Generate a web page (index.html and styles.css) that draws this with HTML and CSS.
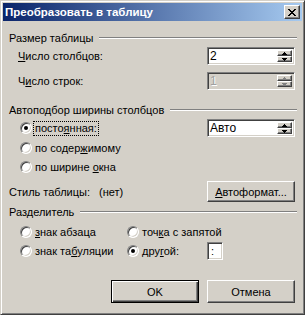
FILE: index.html
```html
<!DOCTYPE html>
<html lang="ru">
<head>
    <meta charset="UTF-8">
    <title>Преобразовать в таблицу</title>
    <link rel="stylesheet" href="styles.css">
</head>
<body>
    <div class="dialog">
        <div class="titlebar">
            <span class="title">Преобразовать в таблицу</span>
            <button class="close-button">
                <svg width="8" height="7" viewBox="0 0 8 7" shape-rendering="crispEdges"><path d="M0 0h2v1H0zM6 0h2v1H6zM1 1h2v1H1zM5 1h2v1H5zM2 2h4v1H2zM3 3h2v1H3zM2 4h4v1H2zM1 5h2v1H1zM5 5h2v1H5zM0 6h2v1H0zM6 6h2v1H6z"/></svg>
            </button>
        </div>

        <div class="dialog-body">
            <div class="group-title head-size"><span>Размер таблицы</span></div>

            <div class="field-row row-cols">
                <span><u>Ч</u>исло столбцов:</span>
                <div class="spin">
                    <span class="spin-value">2</span>
                    <div class="spin-buttons">
                        <span class="spin-btn"><svg width="5" height="3" viewBox="0 0 5 3" shape-rendering="crispEdges"><path d="M2 0h1v1H2zM1 1h3v1H1zM0 2h5v1H0z"/></svg></span>
                        <span class="spin-btn"><svg width="5" height="3" viewBox="0 0 5 3" shape-rendering="crispEdges"><path d="M0 0h5v1H0zM1 1h3v1H1zM2 2h1v1H2z"/></svg></span>
                    </div>
                </div>
            </div>

            <div class="field-row row-rows">
                <span>Ч<u>и</u>сло строк:</span>
                <div class="spin disabled">
                    <span class="spin-value">1</span>
                    <div class="spin-buttons">
                        <span class="spin-btn"><svg width="5" height="3" viewBox="0 0 5 3" shape-rendering="crispEdges"><path d="M2 0h1v1H2zM1 1h3v1H1zM0 2h5v1H0z"/></svg></span>
                        <span class="spin-btn"><svg width="5" height="3" viewBox="0 0 5 3" shape-rendering="crispEdges"><path d="M0 0h5v1H0zM1 1h3v1H1zM2 2h1v1H2z"/></svg></span>
                    </div>
                </div>
            </div>

            <div class="group-title head-fit"><span>Автоподбор ширины столбцов</span></div>

            <div class="radio-row fit-1">
                <label class="radio"><span class="radio-dot checked"></span><span class="radio-text focused">посто<u>я</u>нная:</span></label>
                <div class="spin">
                    <span class="spin-value">Авто</span>
                    <div class="spin-buttons">
                        <span class="spin-btn"><svg width="5" height="3" viewBox="0 0 5 3" shape-rendering="crispEdges"><path d="M2 0h1v1H2zM1 1h3v1H1zM0 2h5v1H0z"/></svg></span>
                        <span class="spin-btn"><svg width="5" height="3" viewBox="0 0 5 3" shape-rendering="crispEdges"><path d="M0 0h5v1H0zM1 1h3v1H1zM2 2h1v1H2z"/></svg></span>
                    </div>
                </div>
            </div>
            <div class="radio-row fit-2">
                <label class="radio"><span class="radio-dot"></span><span class="radio-text">по содер<u>ж</u>имому</span></label>
            </div>
            <div class="radio-row fit-3">
                <label class="radio"><span class="radio-dot"></span><span class="radio-text">по ширине <u>о</u>кна</span></label>
            </div>

            <div class="style-row">
                <span class="style-label">Стиль таблицы:</span>
                <span class="style-value">(нет)</span>
                <button class="button"><u>А</u>втоформат...</button>
            </div>

            <div class="group-title head-sep"><span>Разделитель</span></div>

            <div class="radio-row sep-1">
                <label class="radio sep-cell"><span class="radio-dot"></span><span class="radio-text"><u>з</u>нак абзаца</span></label>
                <label class="radio"><span class="radio-dot"></span><span class="radio-text">точ<u>к</u>а с запятой</span></label>
            </div>
            <div class="radio-row sep-2">
                <label class="radio sep-cell"><span class="radio-dot"></span><span class="radio-text">знак та<u>б</u>уляции</span></label>
                <label class="radio other-cell"><span class="radio-dot checked"></span><span class="radio-text">дру<u>г</u>ой:</span></label>
                <span class="small-input">:</span>
            </div>

            <div class="actions">
                <button class="button default">OK</button>
                <button class="button">Отмена</button>
            </div>
        </div>
    </div>
</body>
</html>
```

FILE: styles.css
```css
body {
    margin: 0;
    font-family: "Liberation Sans", Arial, sans-serif;
    font-size: 11px;
    color: #000;
    background: #d4d0c8;
}

u {
    text-decoration: underline;
    text-underline-offset: 1px;
}

.dialog {
    width: 305px;
    height: 315px;
    box-sizing: border-box;
    background: #d4d0c8;
    border: 1px solid;
    border-color: #d4d0c8 #404040 #404040 #d4d0c8;
    box-shadow: inset 1px 1px #fff, inset -1px -1px #808080;
    padding: 2px;
}

.titlebar {
    height: 18px;
    display: flex;
    align-items: center;
    justify-content: space-between;
    background: linear-gradient(to right, #0a246a, #a6caf0);
    padding: 0 2px 0 2px;
}

.title {
    color: #fff;
    font-weight: bold;
    font-size: 11.5px;
}

.close-button {
    width: 16px;
    height: 14px;
    padding: 0;
    display: flex;
    align-items: center;
    justify-content: center;
    background: #d4d0c8;
    border: 1px solid;
    border-color: #fff #404040 #404040 #fff;
    box-shadow: inset -1px -1px #808080;
}

.dialog-body {
    padding: 10px 5px 0 6px;
}

.group-title {
    height: 14px;
    display: flex;
    align-items: center;
}

.group-title::after {
    content: '';
    flex: 1;
    margin-left: 6px;
    border-top: 1px solid #808080;
    border-bottom: 1px solid #fff;
}

.head-fit { margin-top: 13px; }
.head-sep { margin-top: 3px; }

.field-row {
    height: 18px;
    display: flex;
    align-items: center;
    justify-content: space-between;
    padding: 0 2px 0 9px;
}

.row-cols { margin-top: 2px; }
.row-rows { margin-top: 7px; }

.spin {
    width: 88px;
    height: 18px;
    box-sizing: border-box;
    display: flex;
    background: #fff;
    border: 1px solid;
    border-color: #808080 #fff #fff #808080;
    box-shadow: inset 1px 1px #404040, inset -1px -1px #d4d0c8;
    padding: 2px;
}

.spin-value {
    flex: 1;
    font-size: 12px;
    line-height: 12px;
}

.spin-buttons {
    width: 15px;
    display: flex;
    flex-direction: column;
}

.spin-btn {
    flex: 1;
    display: flex;
    align-items: center;
    justify-content: center;
    background: #d4d0c8;
    border: 1px solid;
    border-color: #fff #404040 #404040 #fff;
    box-shadow: inset -1px -1px #808080;
}

.spin.disabled {
    background: #d4d0c8;
}

.spin.disabled .spin-value {
    color: #a0a0a0;
    text-shadow: 1px 1px #fff;
}

.spin.disabled svg {
    fill: #808080;
}

.radio-row {
    height: 18px;
    display: flex;
    align-items: center;
    padding: 0 2px 0 11px;
}

.fit-1 {
    margin-top: 2px;
    justify-content: space-between;
}
.fit-2 { margin-top: 2px; }
.fit-3 { margin-top: 1px; }
.sep-1 { margin-top: 4px; }
.sep-2 { margin-top: 1px; }

.radio {
    display: flex;
    align-items: center;
}

.radio-dot {
    width: 12px;
    height: 12px;
    box-sizing: border-box;
    border-radius: 50%;
    background: #fff;
    border: 1px solid;
    border-color: #808080 #fff #fff #808080;
    box-shadow: inset 1px 1px #404040, inset -1px -1px #d4d0c8;
    display: flex;
    align-items: center;
    justify-content: center;
    margin-right: 1px;
}

.radio-dot.checked::after {
    content: '';
    width: 4px;
    height: 4px;
    border-radius: 50%;
    background: #000;
}

.radio-text {
    padding: 0 1px;
    border: 1px dotted transparent;
    line-height: 13px;
}

.radio-text.focused {
    border-color: #000;
}

.sep-cell { width: 107px; }
.other-cell { width: 80px; }

.small-input {
    width: 16px;
    height: 18px;
    box-sizing: border-box;
    background: #fff;
    border: 1px solid;
    border-color: #808080 #fff #fff #808080;
    box-shadow: inset 1px 1px #404040, inset -1px -1px #d4d0c8;
    padding: 2px 0 0 3px;
}

.style-row {
    height: 21px;
    margin-top: 5px;
    display: flex;
    align-items: center;
    padding-right: 2px;
}

.style-label { width: 90px; }
.style-value { flex: 1; }

.button {
    width: 88px;
    height: 21px;
    padding: 0;
    font: inherit;
    color: #000;
    background: #d4d0c8;
    border: 1px solid;
    border-color: #fff #404040 #404040 #fff;
    box-shadow: inset -1px -1px #808080;
}

.actions {
    display: flex;
    justify-content: flex-end;
    gap: 8px;
    margin-top: 20px;
    padding-right: 2px;
}

.actions .button {
    height: 23px;
}

.button.default {
    border: 1px solid #000;
    box-shadow: inset 1px 1px #fff, inset -1px -1px #404040, inset -2px -2px #808080;
}
```
